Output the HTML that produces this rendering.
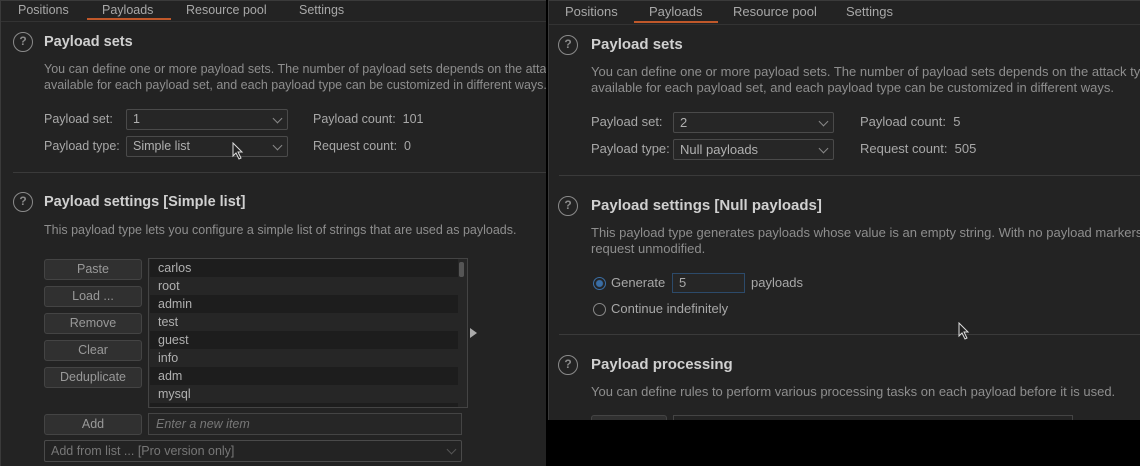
<!DOCTYPE html>
<html><head><meta charset="utf-8"><style>
*{margin:0;padding:0;box-sizing:border-box}
body{width:1140px;height:466px;background:#000;position:relative;overflow:hidden;font-family:"Liberation Sans","DejaVu Sans",sans-serif;font-size:12.5px;color:#a8a8a8}
.p{position:absolute;background:#232323;overflow:hidden}
.t{position:absolute;white-space:nowrap;line-height:16px;transform:translateY(-8px)}
.h{font-weight:bold;font-size:14.5px;color:#d0d0d0}
.d{color:#8e8e8e}
.q{position:absolute;width:20px;height:20px;border:1.6px solid #8a8a8a;border-radius:50%;color:#8a8a8a;font-size:12px;text-align:center;line-height:17px;font-weight:bold}
.sel{position:absolute;border:1px solid #4a4a4a;border-radius:2px;background:#262626}
.sel span{position:absolute;left:6px;top:2px;color:#b0b0b0}
.sel i{position:absolute;right:6px;top:5px;width:7px;height:7px;border-right:1.2px solid #888;border-bottom:1.2px solid #888;transform:rotate(45deg)}
.ln{position:absolute;height:1px;background:#3a3a3a}
.btn{position:absolute;left:43px;width:98px;height:21px;background:#303030;border:1px solid #444;border-radius:3px;text-align:center;line-height:19px;color:#999}
.row{position:absolute;left:1px;width:308px;height:18px;line-height:18px;padding-left:8px;color:#b0b0b0}
.rad{position:absolute;width:13px;height:13px;border:1px solid #888;border-radius:50%}
</style></head><body>
<div class="p" style="left:0;top:0;width:546px;height:466px;border-left:1px solid #3a3a3a;border-top:1px solid #3a3a3a">
 <div class="t" style="left:17px;top:9px">Positions</div>
 <div class="t" style="left:101px;top:9px">Payloads</div>
 <div class="t" style="left:185px;top:9px">Resource pool</div>
 <div class="t" style="left:298px;top:9px">Settings</div>
 <div style="position:absolute;left:86px;top:17px;width:84px;height:2px;background:#c0582a"></div>
 <div class="ln" style="left:0;top:20px;width:546px;background:#333"></div>
 <div class="q" style="left:12px;top:31px">?</div>
 <div class="t h" style="left:43px;top:41px">Payload sets</div>
 <div class="t d" style="left:43px;top:68px">You can define one or more payload sets. The number of payload sets depends on the attack type defined</div>
 <div class="t d" style="left:43px;top:84px">available for each payload set, and each payload type can be customized in different ways.</div>
 <div class="t" style="left:43px;top:118px">Payload set:</div>
 <div class="sel" style="left:125px;top:108px;width:162px;height:21px"><span>1</span><i></i></div>
 <div class="t" style="left:312px;top:118px">Payload count:&nbsp; 101</div>
 <div class="t" style="left:43px;top:145px">Payload type:</div>
 <div class="sel" style="left:125px;top:135px;width:162px;height:21px"><span>Simple list</span><i></i></div>
 <div class="t" style="left:312px;top:145px">Request count:&nbsp; 0</div>
 <div class="ln" style="left:12px;top:171px;width:534px"></div>
 <div class="q" style="left:12px;top:191px">?</div>
 <div class="t h" style="left:43px;top:201px">Payload settings [Simple list]</div>
 <div class="t d" style="left:43px;top:229px">This payload type lets you configure a simple list of strings that are used as payloads.</div>
 <div class="btn" style="top:258px">Paste</div>
 <div class="btn" style="top:285px">Load ...</div>
 <div class="btn" style="top:312px">Remove</div>
 <div class="btn" style="top:339px">Clear</div>
 <div class="btn" style="top:366px">Deduplicate</div>
 <div style="position:absolute;left:147px;top:257px;width:320px;height:150px;border:1px solid #444;background:#262626;overflow:hidden">
  <div class="row" style="top:0;background:#1d1d1d">carlos</div>
  <div class="row" style="top:18px">root</div>
  <div class="row" style="top:36px;background:#1d1d1d">admin</div>
  <div class="row" style="top:54px">test</div>
  <div class="row" style="top:72px;background:#1d1d1d">guest</div>
  <div class="row" style="top:90px">info</div>
  <div class="row" style="top:108px;background:#1d1d1d">adm</div>
  <div class="row" style="top:126px">mysql</div>
  <div class="row" style="top:144px;background:#1d1d1d"></div>
  <div style="position:absolute;left:310px;top:3px;width:5px;height:15px;background:#555;border-radius:2px"></div>
 </div>
 <div style="position:absolute;left:469px;top:327px;width:0;height:0;border-left:7px solid #aaa;border-top:5px solid transparent;border-bottom:5px solid transparent"></div>
 <div class="btn" style="top:413px">Add</div>
 <div style="position:absolute;left:147px;top:412px;width:314px;height:22px;border:1px solid #444;background:#262626"><span class="t" style="left:7px;top:10px;font-style:italic;color:#777">Enter a new item</span></div>
 <div class="sel" style="left:43px;top:439px;width:418px;height:22px;background:#232323"><span style="color:#777;top:3px">Add from list ... [Pro version only]</span><i style="border-color:#555"></i></div>
 <svg style="position:absolute;left:231px;top:141px" width="12" height="18" viewBox="0 0 12 18"><path d="M1 1 L1 14 L4 11 L7 17 L9 16 L6 10 L10 10 Z" fill="#222" stroke="#ddd" stroke-width="1"/></svg>
</div>
<div class="p" style="left:548px;top:0;width:592px;height:420px;border-left:1px solid #3a3a3a;border-top:1px solid #3a3a3a;font-size:13px">
 <div class="t" style="left:16px;top:11px">Positions</div>
 <div class="t" style="left:100px;top:11px">Payloads</div>
 <div class="t" style="left:184px;top:11px">Resource pool</div>
 <div class="t" style="left:297px;top:11px">Settings</div>
 <div style="position:absolute;left:85px;top:20px;width:84px;height:2px;background:#c0582a"></div>
 <div class="ln" style="left:0;top:23px;width:592px;background:#333"></div>
 <div class="q" style="left:9px;top:34px">?</div>
 <div class="t h" style="left:42px;top:44px;font-size:15px">Payload sets</div>
 <div class="t d" style="left:42px;top:71px">You can define one or more payload sets. The number of payload sets depends on the attack type defined</div>
 <div class="t d" style="left:42px;top:87px">available for each payload set, and each payload type can be customized in different ways.</div>
 <div class="t" style="left:42px;top:121px">Payload set:</div>
 <div class="sel" style="left:124px;top:111px;width:161px;height:21px"><span>2</span><i></i></div>
 <div class="t" style="left:311px;top:121px">Payload count:&nbsp; 5</div>
 <div class="t" style="left:42px;top:148px">Payload type:</div>
 <div class="sel" style="left:124px;top:138px;width:161px;height:21px"><span>Null payloads</span><i></i></div>
 <div class="t" style="left:311px;top:148px">Request count:&nbsp; 505</div>
 <div class="ln" style="left:10px;top:174px;width:582px"></div>
 <div class="q" style="left:9px;top:195px">?</div>
 <div class="t h" style="left:42px;top:205px;font-size:15px">Payload settings [Null payloads]</div>
 <div class="t d" style="left:42px;top:232px">This payload type generates payloads whose value is an empty string. With no payload markers configured</div>
 <div class="t d" style="left:42px;top:248px">request unmodified.</div>
 <div class="rad" style="left:44px;top:276px;border-color:#3a6ea5;background:radial-gradient(circle,#3a6ea5 3px,#232323 4px)"></div>
 <div class="t" style="left:62px;top:282px">Generate</div>
 <div style="position:absolute;left:123px;top:272px;width:73px;height:20px;border:1px solid #2c4a6a;background:#262626"><span class="t" style="left:6px;top:9px">5</span></div>
 <div class="t" style="left:202px;top:282px">payloads</div>
 <div class="rad" style="left:44px;top:302px"></div>
 <div class="t" style="left:62px;top:308px">Continue indefinitely</div>
 <div class="ln" style="left:10px;top:333px;width:582px"></div>
 <svg style="position:absolute;left:409px;top:321px" width="12" height="18" viewBox="0 0 12 18"><path d="M1 1 L1 14 L4 11 L7 17 L9 16 L6 10 L10 10 Z" fill="#222" stroke="#ddd" stroke-width="1"/></svg>
 <div class="q" style="left:9px;top:354px">?</div>
 <div class="t h" style="left:42px;top:364px;font-size:15px">Payload processing</div>
 <div class="t d" style="left:42px;top:391px">You can define rules to perform various processing tasks on each payload before it is used.</div>
 <div style="position:absolute;left:42px;top:414px;width:76px;height:10px;background:#303030;border:1px solid #444;border-radius:3px"></div>
 <div style="position:absolute;left:124px;top:414px;width:400px;height:10px;border:1px solid #444"></div>
</div>
</body></html>
